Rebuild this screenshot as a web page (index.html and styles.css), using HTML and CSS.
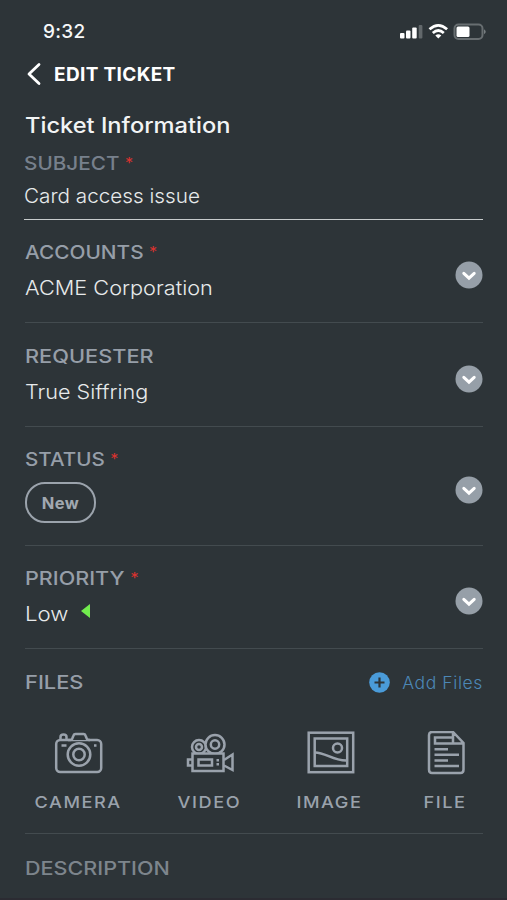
FILE: index.html
```html
<!DOCTYPE html>
<html lang="en">
<head>
<meta charset="utf-8">
<title>Edit Ticket</title>
<link rel="stylesheet" href="styles.css">
</head>
<body>
<main class="screen">
  <div class="statusbar">
    <span class="time">9:32</span>
    <svg class="signals" width="88" height="20" viewBox="0 0 88 20">
      <g fill="#fff"><rect x="0" y="12" width="4.500" height="5.500" rx="1"/><rect x="6" y="9.500" width="4.500" height="8" rx="1"/><rect x="12.200" y="6.500" width="4.500" height="11" rx="1"/></g>
      <rect x="18.700" y="4" width="3.700" height="13.500" rx="1" fill="#62686b"/>
      <g fill="none" stroke="#fff" stroke-width="2.700"><path d="M29.500 8.300Q38.300 .3 47.100 8.300"/><path d="M32.800 12Q38.300 7 43.800 12"/></g>
      <path d="M35.300 14.500Q38.300 12 41.300 14.500L38.300 17.500Z" fill="#fff"/>
      <rect x="54.500" y="3.500" width="28" height="14.500" rx="4" fill="none" stroke="#686e71" stroke-width="2"/>
      <rect x="56.500" y="5.500" width="13" height="10.500" rx="1.500" fill="#fff"/><path d="M84 8.300Q87.500 10.700 84 13.300Z" fill="#777d80"/>
    </svg>
  </div>
  <header class="header">
    <svg width="14" height="24" viewBox="0 0 14 24"><path d="M12 2.500L2 12L12 21.500" fill="none" stroke="#fff" stroke-width="2.800" stroke-linecap="round" stroke-linejoin="round"/></svg>
    <span class="heading">EDIT TICKET</span>
  </header>
  <h1 class="title">Ticket Information</h1>
  <section class="field subject">
    <div class="label t-subject"><span>SUBJECT</span><i class="req">*</i></div>
    <div class="value v-card">Card access issue</div>
  </section>
  <section class="field">
    <div class="copy"><div class="label t-accounts"><span>ACCOUNTS</span><i class="req">*</i></div>
    <div class="value v-acme">ACME Corporation</div></div>
    <svg class="chevron" width="28" height="28" viewBox="0 0 28 28"><circle cx="14" cy="14" r="13.500" fill="#969fa8"/><path d="M8.800 12.300L14 17.200L19.200 12.300" fill="none" stroke="#fff" stroke-width="3" stroke-linecap="round"/></svg>
  </section>
  <section class="field">
    <div class="copy"><div class="label t-requester"><span>REQUESTER</span></div>
    <div class="value v-true">True Siffring</div></div>
    <svg class="chevron" width="28" height="28" viewBox="0 0 28 28"><circle cx="14" cy="14" r="13.500" fill="#969fa8"/><path d="M8.800 12.300L14 17.200L19.200 12.300" fill="none" stroke="#fff" stroke-width="3" stroke-linecap="round"/></svg>
  </section>
  <section class="field status">
    <div class="copy"><div class="label t-status"><span>STATUS</span><i class="req">*</i></div>
    <span class="pill">New</span></div>
    <svg class="chevron" width="28" height="28" viewBox="0 0 28 28"><circle cx="14" cy="14" r="13.500" fill="#969fa8"/><path d="M8.800 12.300L14 17.200L19.200 12.300" fill="none" stroke="#fff" stroke-width="3" stroke-linecap="round"/></svg>
  </section>
  <section class="field">
    <div class="copy"><div class="label t-priority"><span>PRIORITY</span><i class="req">*</i></div>
    <div class="value v-low"><span>Low</span><svg class="flag" width="9" height="14" viewBox="0 0 9 14"><path d="M0 7L9 0V14Z" fill="#72ec4e"/></svg></div></div>
    <svg class="chevron" width="28" height="28" viewBox="0 0 28 28"><circle cx="14" cy="14" r="13.500" fill="#969fa8"/><path d="M8.800 12.300L14 17.200L19.200 12.300" fill="none" stroke="#fff" stroke-width="3" stroke-linecap="round"/></svg>
  </section>
  <section class="files">
    <div class="files-head">
      <div class="label t-files"><span>FILES</span></div>
      <div class="add"><svg width="21" height="21" viewBox="0 0 21 21"><circle cx="10.500" cy="10.500" r="10.300" fill="#4a9bd9"/><path d="M5.500 10.500H15.500M10.500 5.500V15.500" stroke="#2d3438" stroke-width="2.200"/></svg><span>Add Files</span></div>
    </div>
    <div class="tiles">
      <div class="tile camera">
        <svg class="icon" width="50" height="46" viewBox="0 0 50 46"><rect x="2.200" y="9" width="45" height="32" rx="4"/><path class="mask" d="M14 9H16.500Q18 9 18.500 7L19.500 4.500Q20 3 21.500 3H29.500Q31 3 31.500 4.500L32.500 7Q33 9 35 9H36"/><path d="M6.500 9V6Q6.500 3.500 9.500 3.500Q12.500 3.500 12.500 6V9M7.500 14.500H12.500"/><circle class="mask" cx="25" cy="23.500" r="11.300"/><circle cx="25" cy="23.500" r="5.700"/><path d="M40 14.500H42.500"/></svg>
        <span>CAMERA</span>
      </div>
      <div class="tile video">
        <svg class="icon" width="50" height="46" viewBox="0 0 50 46"><circle cx="14" cy="16" r="7"/><circle cx="14" cy="16" r="3"/><circle class="mask" cx="30" cy="13.500" r="9.500"/><circle cx="30" cy="13.500" r="4.200"/><rect class="mask" x="7.500" y="22.500" width="31" height="17.500"/><rect x="13.500" y="28.500" width="13.500" height="6"/><path d="M7.500 28.500H3V34.500H7.500M39 29L47.500 23.500V39L39 34.500M31.500 29.300H34M31.500 33.300H34"/></svg>
        <span>VIDEO</span>
      </div>
      <div class="tile image">
        <svg class="icon" width="50" height="46" viewBox="0 0 50 46"><rect x="2.700" y="1.700" width="44.500" height="39.500"/><rect x="8.700" y="7.500" width="32.500" height="27.500"/><circle cx="31.500" cy="17" r="4.500"/><path d="M9 21.500C20 21.500 27 30 41 29.500"/></svg>
        <span>IMAGE</span>
      </div>
      <div class="tile file">
        <svg class="icon" width="50" height="46" viewBox="0 0 50 46"><path d="M11 1H32L42.500 12V38.500Q42.500 42 39.500 42H11Q8 42 8 38.500V4Q8 1 11 1ZM32 1V12.500H42.500M32 6.500H14V12.500H32M13.500 18.200H27M13.500 23.800H38M13.500 29.400H27M13.500 35H38"/></svg>
        <span>FILE</span>
      </div>
    </div>
  </section>
  <section class="description"><div class="label t-description"><span>DESCRIPTION</span></div></section>
  <div class="edge"></div>
</main>
</body>
</html>
```
FILE: styles.css
```css
* { box-sizing: border-box; }
body { margin: 0; background: #2d3438; font-family: Inter, "Liberation Sans", sans-serif; }
.screen { width: 507px; height: 900px; overflow: hidden; padding: 0 24px 0 25px; display: flex; flex-direction: column; background: #2d3438; }
.screen > * { flex-shrink: 0; }
.statusbar { height: 53px; padding: 11px 0 0 18px; display: flex; justify-content: space-between; }
.time { color: #f6f8f9; font-size: 19px; font-weight: 500; line-height: 41px; letter-spacing: .3px; }
.signals { margin: 10px -5px 0 0; }
.header { height: 44px; display: flex; align-items: center; gap: 13px; padding-left: 2px; }
.header svg { margin-top: -2px; }
.heading { color: #fff; font-size: 19px; font-weight: 700; line-height: 24px; letter-spacing: .35px; }
.title { height: 55px; margin: 0; padding-top: 14px; color: #f2f4f5; font-size: 21px; font-weight: 500; line-height: 30px; transform: scaleX(1.125); transform-origin: left; white-space: nowrap; }
.label { display: flex; height: 24px; line-height: 24px; font-size: 19px; font-weight: 500; color: #969ea8; transform-origin: left; }
.t-subject { transform: scaleX(1.090); }
.t-accounts { transform: scaleX(1.095); }
.t-requester { transform: scaleX(1.145); }
.t-status { transform: scaleX(1.085); }
.t-priority { transform: scaleX(1.135); }
.t-files { transform: scaleX(1.150); }
.t-description { transform: scaleX(1.135); }
.req { color: #d8322f; font-style: normal; font-weight: 400; font-size: 15px; margin-left: 5px; line-height: 22px; }
.value { height: 28px; margin-top: 9px; font-size: 20px; font-weight: 300; line-height: 28px; color: #e7eaeb; white-space: nowrap; transform-origin: left; }
.v-card { transform: scaleX(1.035); }
.v-acme { transform: scaleX(1.085); }
.v-true { transform: scaleX(1.080); }
.v-low span { transform: scaleX(1.110); transform-origin: left; }
.field { height: 103.500px; padding-top: 21.500px; display: flex; justify-content: space-between; border-bottom: 1.500px solid #434b4f; }
.field.subject { display: block; height: 67.500px; padding: 0; border-color: #c7cbcc; margin-left: -1px; }
.subject .label { color: #77808c; }
.subject .value { margin-top: 6px; }
.chevron { margin-top: 20px; }
.field.status { height: 119px; }
.status .chevron { margin-top: 28px; }
.pill { display: flex; align-items: center; justify-content: center; width: 71px; height: 41px; margin-top: 10px; border: 2px solid #9ba3ac; border-radius: 20px; color: #a1a8b0; font-size: 16.500px; font-weight: 700; letter-spacing: .5px; }
.v-low { display: flex; }
.flag { margin: 4px 0 0 17px; }
.files { height: 184.500px; padding-top: 22px; border-bottom: 1.500px solid #434b4f; }
.files-head { display: flex; justify-content: space-between; }
.add { display: flex; align-items: center; gap: 12px; color: #4c87b6; font-size: 17.500px; line-height: 24px; font-weight: 300; letter-spacing: .600px; white-space: nowrap; }
.add svg { margin-top: -2px; }
.tiles { display: grid; grid-template-columns: 108px 154px 87px 143px; margin: 36px 0 0 0; }
.tile { display: flex; flex-direction: column; align-items: center; color: #9aa2ac; font-size: 16.500px; font-weight: 500; line-height: 24px; letter-spacing: 1.400px; }
.tile span { margin-right: -1.400px; transform: translateX(-1.5px) scaleX(1.1); }
.icon { margin-bottom: 13px; fill: none; stroke: #9aa2ac; stroke-width: 2.500; }
.icon .mask { fill: #2d3438; }
.description { padding-top: 23.500px; }
.description .label { color: #7d858c; }
.edge { height: 2px; margin: auto -24px 0 -25px; background: #2b2b32; }
```
